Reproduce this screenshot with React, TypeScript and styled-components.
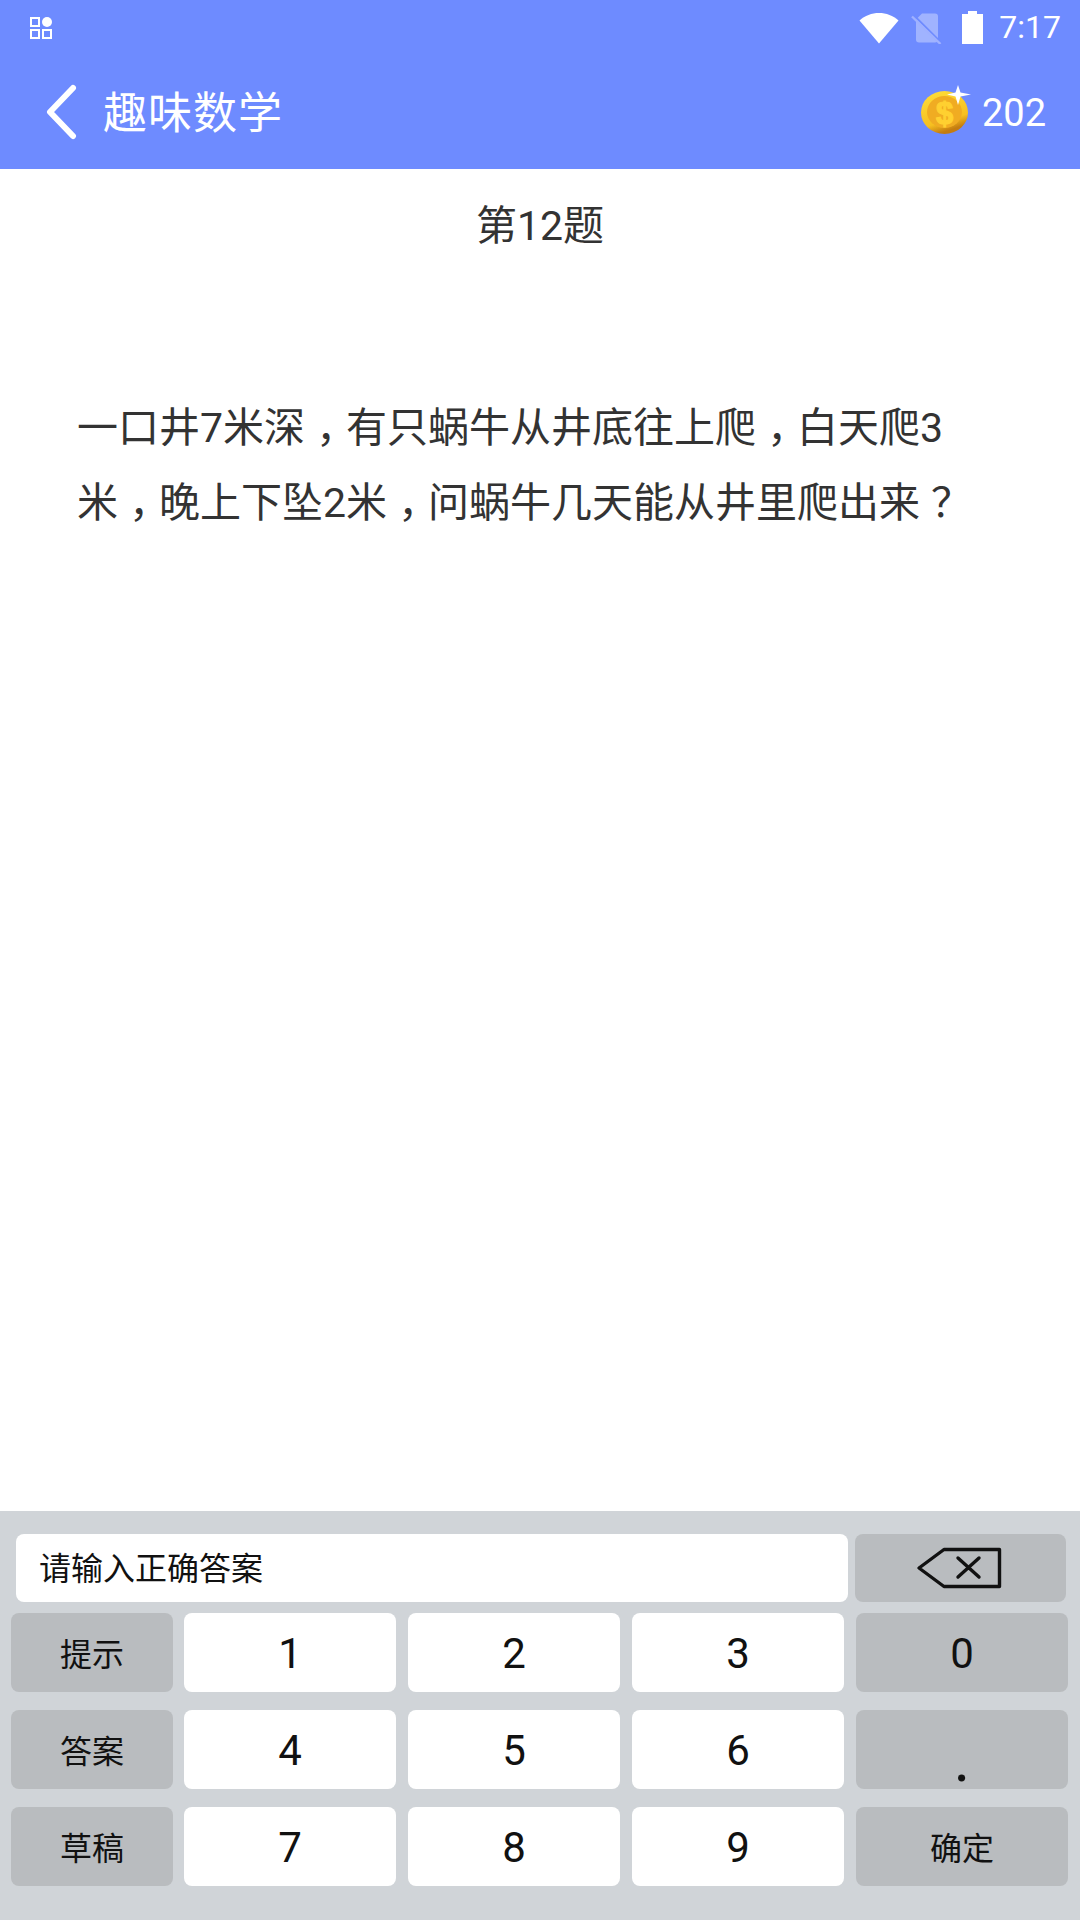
import React from "react";
import styled, { createGlobalStyle } from "styled-components";

const Global = createGlobalStyle`
  html, body { margin: 0; padding: 0; background: #fff; }
  body { font-family: Roboto, "Noto Sans CJK SC", sans-serif; }
`;

const Page = styled.div`
  width: 1080px;
  height: 1920px;
  display: flex;
  flex-direction: column;
  overflow: hidden;
  background: #fff;
`;

const Header = styled.header`
  height: 169px;
  background: #6e8bff;
  color: #fff;
  display: flex;
  flex-direction: column;
`;

const StatusBar = styled.div`
  height: 55px;
  display: flex;
  align-items: center;
  padding: 0 19px 0 30px;
`;

const StatusIcons = styled.div`
  margin-left: auto;
  display: flex;
  align-items: center;
`;

const Clock = styled.span`
  font-size: 32px;
  line-height: 55px;
  margin-left: 16px;
`;

const Toolbar = styled.div`
  flex: 1;
  display: flex;
  align-items: center;
  padding: 0 34px 0 46px;
`;

const Title = styled.h1`
  margin: 0 0 0 25px;
  padding-top: 3px;
  font-size: 44px;
  font-weight: 400;
  letter-spacing: 1px;
  line-height: 60px;
`;

const Coins = styled.div`
  margin-left: auto;
  display: flex;
  align-items: center;
  gap: 11px;
  padding-top: 2px;
  font-size: 38px;
  line-height: 50px;
`;

const Content = styled.main`
  flex: 1;
  color: #333;
  display: flex;
  flex-direction: column;
`;

const QuestionNo = styled.div`
  margin-top: 29px;
  text-align: center;
  font-size: 41px;
  line-height: 56px;
`;

const Question = styled.p`
  margin: 137px 0 0;
  padding: 0 77px;
  font-size: 41px;
  line-height: 75px;
`;

const Punct = styled.span`
  margin-left: 11px;
  letter-spacing: -11px;
`;

const Keyboard = styled.section`
  height: 409px;
  background: #d0d4d8;
  padding: 23px 12px 0 11px;
  box-sizing: border-box;
  display: flex;
  flex-direction: column;
`;

const InputRow = styled.div`
  height: 68px;
  display: flex;
  padding-left: 5px;
  padding-right: 2px;
`;

const InputBox = styled.div`
  width: 832px;
  background: #fff;
  border-radius: 8px;
  display: flex;
  align-items: center;
  padding: 0 0 4px 23px;
  box-sizing: border-box;
  font-size: 32px;
  color: #111;
`;

const Backspace = styled.div`
  margin-left: 7px;
  width: 211px;
  background: #b9bcbf;
  border-radius: 8px;
  display: flex;
  align-items: center;
  justify-content: center;
  padding-right: 3px;
  box-sizing: border-box;
`;

const Keys = styled.div`
  margin-top: 11px;
  display: grid;
  grid-template-columns: 161px repeat(4, 212px);
  grid-auto-rows: 79px;
  column-gap: 12px;
  row-gap: 18px;
`;

const Key = styled.div<{ $gray?: boolean; $small?: boolean; $low?: boolean; $side?: boolean }>`
  background: ${(p) => (p.$gray ? "#b9bcbf" : "#fff")};
  border-radius: 8px;
  display: flex;
  align-items: ${(p) => (p.$low ? "flex-end" : "center")};
  justify-content: center;
  box-sizing: border-box;
  margin-right: ${(p) => (p.$side ? "-1px" : "0")};
  padding-top: ${(p) => (p.$small ? "4px" : "2px")};
  color: #111;
  font-size: ${(p) => (p.$low ? "64px" : p.$small ? "32px" : "42px")};
  line-height: ${(p) => (p.$low ? "58px" : "1")};
`;

const rows: { label: string; gray?: boolean; small?: boolean; low?: boolean; side?: boolean }[] = [
  { label: "提示", gray: true, small: true, side: true },
  { label: "1" },
  { label: "2" },
  { label: "3" },
  { label: "0", gray: true },
  { label: "答案", gray: true, small: true, side: true },
  { label: "4" },
  { label: "5" },
  { label: "6" },
  { label: ".", gray: true, low: true },
  { label: "草稿", gray: true, small: true, side: true },
  { label: "7" },
  { label: "8" },
  { label: "9" },
  { label: "确定", gray: true, small: true },
];

const GridIcon = () => (
  <svg width="22" height="22" viewBox="0 0 22 22">
    <g fill="none" stroke="#fff" strokeWidth="2">
      <rect x="1" y="1" width="8" height="8" />
      <rect x="1" y="13" width="8" height="8" />
      <rect x="13" y="13" width="8" height="8" />
    </g>
    <circle cx="17" cy="5" r="5" fill="#fff" />
  </svg>
);

const WifiIcon = () => (
  <svg width="40" height="32" viewBox="0 0 40 32">
    <path d="M0.5 8.5C11 -1.5 29 -1.5 39.5 8.5L20 31.5Z" fill="#fff" />
  </svg>
);

const SimOffIcon = () => (
  <svg width="32" height="32" viewBox="0 0 32 32" style={{ marginLeft: 12 }}>
    <path d="M11 1.5h13a3 3 0 0 1 3 3v23a3 3 0 0 1-3 3H8a3 3 0 0 1-3-3V7.5Z" fill="#fff" fillOpacity="0.35" />
    <path d="M3 3.5L31 31.5" stroke="#6e8bff" strokeWidth="2" />
    <path d="M1 4.5L29.5 32" stroke="#9fb1ff" strokeWidth="2.4" />
  </svg>
);

const BatteryIcon = () => (
  <svg width="21" height="33" viewBox="0 0 21 33" style={{ marginLeft: 19 }}>
    <path d="M6 0h9v3h6v30H0V3h6Z" fill="#fff" />
  </svg>
);

const BackIcon = () => (
  <svg width="32" height="56" viewBox="0 0 32 56">
    <path d="M27 4L4 28L27 52" fill="none" stroke="#fff" strokeWidth="6" strokeLinecap="round" strokeLinejoin="round" />
  </svg>
);

const CoinIcon = () => (
  <svg width="50" height="50" viewBox="0 0 50 50" style={{ marginTop: -6 }}>
    <defs>
      <linearGradient id="coinEdge" x1="0" y1="0" x2="0.35" y2="1">
        <stop offset="0" stopColor="#ffdf3a" />
        <stop offset="0.78" stopColor="#f6bf20" />
        <stop offset="1" stopColor="#c47c10" />
      </linearGradient>
    </defs>
    <ellipse cx="23.5" cy="27.5" rx="23.5" ry="21.5" fill="url(#coinEdge)" />
    <ellipse cx="23.5" cy="27" rx="17.5" ry="16" fill="#f0ac22" />
    <text x="23.5" y="38.5" textAnchor="middle" fontFamily="Liberation Sans, sans-serif" fontWeight="700" fontSize="31" fill="#ffd030" stroke="#ffd030" strokeWidth="1.2">$</text>
    <path d="M37 0L39.5 7.5L50 9.5L39.5 11.5L37 20L34.5 11.5L26 9.5L34.5 7.5Z" fill="#fff" />
  </svg>
);

const BackspaceIcon = () => (
  <svg width="86" height="44" viewBox="0 0 86 44">
    <path d="M28 3.5H83.5V40.5H28L3 22Z" fill="none" stroke="#111" strokeWidth="3.4" strokeLinejoin="round" />
    <path d="M42 12L63 31M63 12L42 31" fill="none" stroke="#111" strokeWidth="3.4" strokeLinecap="round" />
  </svg>
);

export default function App() {
  return (
    <Page>
      <Global />
      <Header>
        <StatusBar>
          <GridIcon />
          <StatusIcons>
            <WifiIcon />
            <SimOffIcon />
            <BatteryIcon />
            <Clock>7:17</Clock>
          </StatusIcons>
        </StatusBar>
        <Toolbar>
          <BackIcon />
          <Title>趣味数学</Title>
          <Coins>
            <CoinIcon />
            202
          </Coins>
        </Toolbar>
      </Header>
      <Content>
        <QuestionNo>第12题</QuestionNo>
        <Question>
          一口井7米深<Punct>，</Punct>有只蜗牛从井底往上爬<Punct>，</Punct>白天爬3
          <br />
          米<Punct>，</Punct>晚上下坠2米<Punct>，</Punct>问蜗牛几天能从井里爬出来<Punct>？</Punct>
        </Question>
      </Content>
      <Keyboard>
        <InputRow>
          <InputBox>请输入正确答案</InputBox>
          <Backspace>
            <BackspaceIcon />
          </Backspace>
        </InputRow>
        <Keys>
          {rows.map((k) => (
            <Key key={k.label} $gray={k.gray} $small={k.small} $low={k.low} $side={k.side}>
              {k.label}
            </Key>
          ))}
        </Keys>
      </Keyboard>
    </Page>
  );
}
